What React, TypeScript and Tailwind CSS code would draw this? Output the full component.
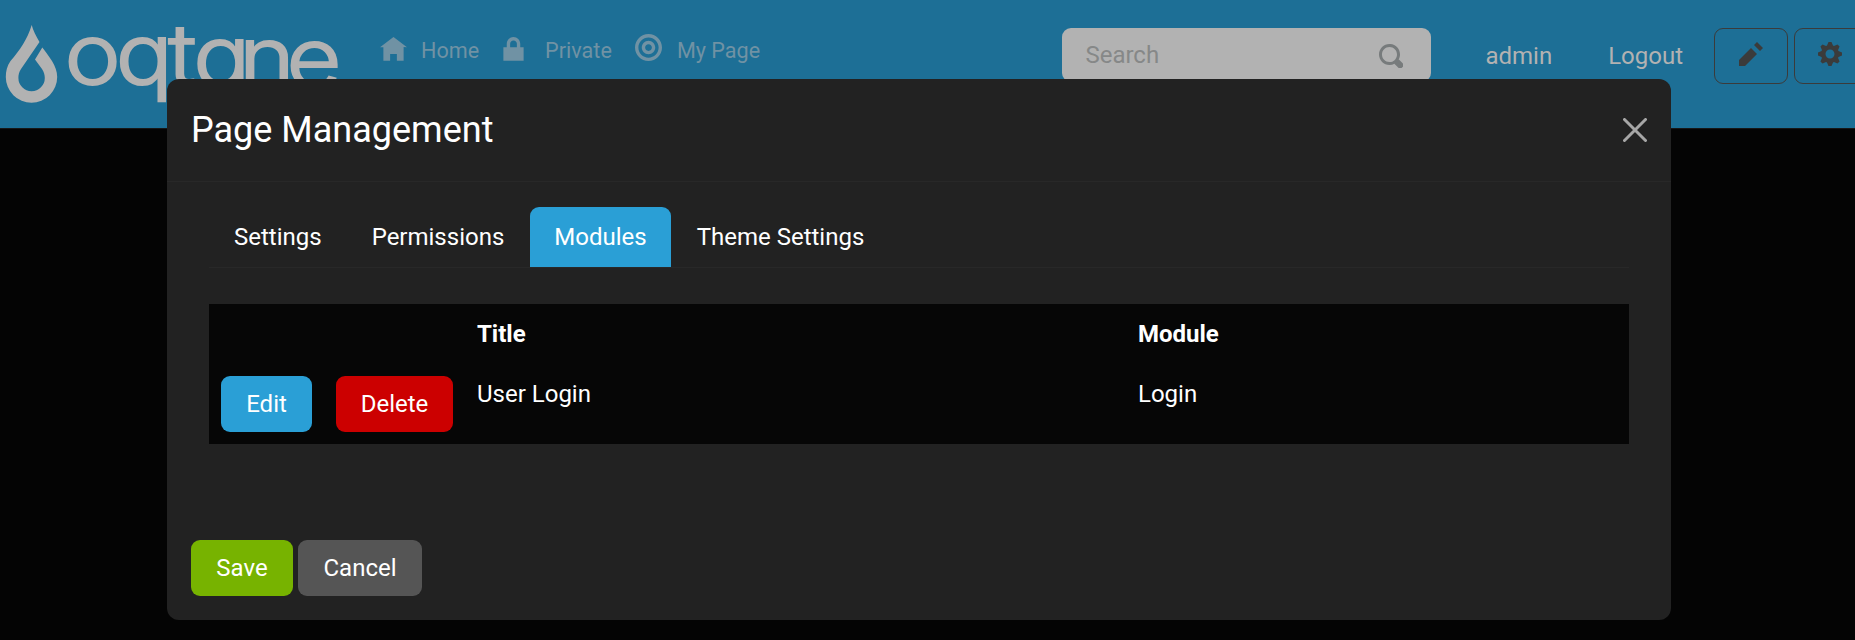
import type { ReactNode } from "react";

const icons = {
  home: "M4 0l-4 3h1v4h2v-2h2v2h2v-4.03l1 .03-4-3z",
  lock: "M4 0c-1.1 0-2 .9-2 2v1h-1v4h6v-4h-1v-1c0-1.1-.9-2-2-2zm0 1c.56 0 1 .44 1 1v1h-2v-1c0-.56.44-1 1-1z",
  target:
    "M4 0c-2.2 0-4 1.8-4 4s1.8 4 4 4 4-1.8 4-4-1.8-4-4-4zm0 1c1.66 0 3 1.34 3 3s-1.34 3-3 3-3-1.34-3-3 1.34-3 3-3zm0 1c-1.1 0-2 .9-2 2s.9 2 2 2 2-.9 2-2-.9-2-2-2zm0 1c.56 0 1 .44 1 1s-.44 1-1 1-1-.44-1-1 .44-1 1-1z",
  pencil: "M6 0l-1 1 2 2 1-1-2-2zm-2 2l-4 4v2h2l4-4-2-2z",
  cog: "M3.5 0l-.5 1.19-.31.13-1.19-.5-.69.69.5 1.19-.13.31-1.19.5v1l1.19.5.13.31-.5 1.19.69.69 1.19-.5.31.13.5 1.19h1l.5-1.19.31-.13 1.19.5.69-.69-.5-1.19.13-.31 1.19-.5v-1l-1.19-.5-.13-.31.5-1.19-.69-.69-1.19.5-.31-.13-.5-1.19h-1zm.5 2.5c.83 0 1.5.67 1.5 1.5s-.67 1.5-1.5 1.5-1.5-.67-1.5-1.5.67-1.5 1.5-1.5z",
  search:
    "M3.5 0c-1.93 0-3.5 1.57-3.5 3.5s1.57 3.5 3.5 3.5c.59 0 1.17-.14 1.66-.41a1 1 0 0 0 .13.13l1 1a1.02 1.02 0 1 0 1.44-1.44l-1-1a1 1 0 0 0-.16-.13c.27-.49.44-1.06.44-1.66 0-1.93-1.55-3.5-3.5-3.5zm0 1c1.39 0 2.5 1.11 2.5 2.5 0 .66-.24 1.27-.66 1.72l-.03.03a1 1 0 0 0-.13.13c-.44.4-1.04.63-1.69.63-1.39 0-2.5-1.11-2.5-2.5s1.11-2.5 2.5-2.5z",
};

function Icon({ name, className }: { name: keyof typeof icons; className: string }) {
  return (
    <svg viewBox="0 0 8 8" fill="currentColor" className={className}>
      <path d={icons[name]} />
    </svg>
  );
}

function Logo() {
  return (
    <svg viewBox="0 0 345 128" className="h-[128px] w-[345px] shrink-0 overflow-visible" fill="#b2b2b2">
      <path d="M31.700 25C27 40 20 50 10.500 61C7 66 5.800 71 5.800 77A25.700 25.700 0 0 0 57.200 77C57.200 71 55 66 52 61Q46 52 42.300 47.500L35 59.500L42 69C44 72 44.800 75 44.800 78A13.200 13.200 0 0 1 18.400 78C18.400 75 19 72 21 69L39.500 42C36 36 33 30 31.700 25Z" />
      <text
        transform="scale(1.13 1)"
        x="57.100 102.500 149 171 211.500 253.500"
        y="84 84.500 85 86 87 88"
        stroke="#b2b2b2"
        strokeWidth="2"
        className="font-['Inter'] text-[84px] font-light [font-feature-settings:'cv11']"
      >
        oqtane
      </text>
    </svg>
  );
}

function NavItem({
  icon,
  label,
  className,
  labelClass,
}: {
  icon: keyof typeof icons;
  label: string;
  className: string;
  labelClass: string;
}) {
  return (
    <a className={`flex text-[#7092a4] ${className}`}>
      <Icon name={icon} className={icon === "target" ? "size-[27px] -mt-px" : "size-[27px] mt-[2px]"} />
      <span className={`text-[21.6px] leading-[32px] ${labelClass}`}>{label}</span>
    </a>
  );
}

function Button({ className, children }: { className: string; children: ReactNode }) {
  return <button className={`h-14 rounded-[9px] text-center leading-9 ${className}`}>{children}</button>;
}

export default function App() {
  return (
    <div className="relative h-[640px] w-full overflow-hidden bg-[#040404] font-['Roboto',sans-serif] text-[24px] leading-9 text-white">
      <header className="flex h-[129px] border-b border-[#171717] bg-[#1d6f96]">
        <Logo />
        <nav className="flex pt-[35px]">
          <NavItem icon="home" label="Home" className="ml-[35px]" labelClass="ml-[14px]" />
          <NavItem icon="lock" label="Private" className="ml-[21px]" labelClass="ml-[18px]" />
          <NavItem icon="target" label="My Page" className="ml-[23px]" labelClass="ml-[15px]" />
        </nav>
        <div className="ml-auto flex shrink-0 pt-7 text-[#b2b2b2]">
          <div className="flex h-[54px] w-[369px] items-start justify-between rounded-[9px] bg-[#b2b2b2] pl-[23px] pr-7 pt-2">
            <span className="mt-px text-[#868888]">Search</span>
            <Icon name="search" className="mt-2 size-6 text-[#777b7c]" />
          </div>
          <span className="ml-[54px] mt-[10px]">admin</span>
          <span className="ml-[56px] mt-[10px]">Logout</span>
          <div className="ml-[31px] flex w-[141px] gap-[6px] overflow-hidden text-[#3b3b3b]">
            <button className="flex h-14 w-[74px] shrink-0 justify-center rounded-[9px] border border-[#3b3b3b] pt-[13px]">
              <Icon name="pencil" className="size-6" />
            </button>
            <button className="flex h-14 w-[74px] shrink-0 rounded-[9px] border border-[#3b3b3b] pl-[23px] pt-[13px]">
              <Icon name="cog" className="size-6" />
            </button>
          </div>
        </div>
      </header>

      <section className="absolute left-[167px] top-[79px] flex h-[541px] w-[1504px] flex-col rounded-[12px] bg-[#222]">
        <div className="flex h-[103px] shrink-0 items-center justify-between border-b border-[#282828] pl-6 pr-6">
          <h5 className="text-[36px] leading-[54px]">Page Management</h5>
          <svg viewBox="0 0 24 24" className="size-6" stroke="#a7a7a7" strokeWidth="3" strokeLinecap="round">
            <path d="M1.500 1.500L22.500 22.500M22.500 1.500L1.500 22.500" />
          </svg>
        </div>
        <div className="px-[42px] pt-[25px]">
          <div className="flex h-[61px] border-b border-[#282828]">
            <a className="px-[25px] pt-3">Settings</a>
            <a className="px-[25px] pt-3">Permissions</a>
            <a className="mx-px rounded-t-[9px] bg-[#2a9fd6] px-6 pt-3">Modules</a>
            <a className="px-[25px] pt-3">Theme Settings</a>
          </div>
          <table className="mt-9 w-[1420px] table-fixed border-collapse bg-[#060606] text-left align-top">
            <colgroup>
              <col className="w-[115px]" />
              <col className="w-[141px]" />
              <col className="w-[661px]" />
              <col />
            </colgroup>
            <thead>
              <tr className="h-[60px]">
                <th />
                <th />
                <th className="p-3 font-bold">Title</th>
                <th className="p-3 font-bold">Module</th>
              </tr>
            </thead>
            <tbody>
              <tr className="h-20 align-top">
                <td className="p-3">
                  <Button className="block w-[91px] bg-[#2a9fd6]">Edit</Button>
                </td>
                <td className="p-3">
                  <Button className="block w-[117px] bg-[#c00]">Delete</Button>
                </td>
                <td className="p-3">User Login</td>
                <td className="p-3">Login</td>
              </tr>
            </tbody>
          </table>
        </div>
        <div className="mt-auto flex gap-[5px] px-6 pb-6">
          <Button className="w-[102px] bg-[#77b300]">Save</Button>
          <Button className="w-[124px] bg-[#555]">Cancel</Button>
        </div>
      </section>
    </div>
  );
}
